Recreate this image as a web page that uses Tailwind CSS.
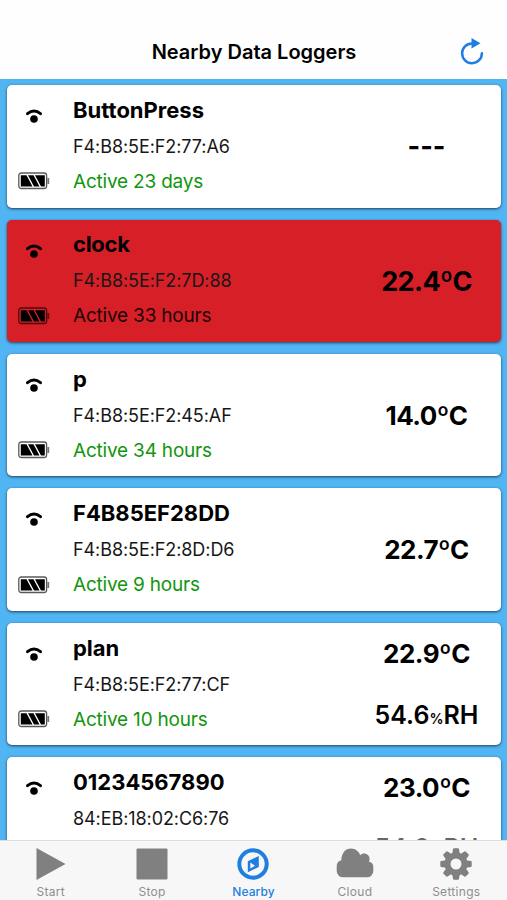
<!DOCTYPE html>
<html lang="en">
<head>
<meta charset="utf-8">
<title>Nearby Data Loggers</title>
<script src="https://cdn.jsdelivr.net/npm/@tailwindcss/browser@4"></script>
</head>
<body class="font-['Inter','Liberation_Sans',sans-serif] text-black">
<div class="flex flex-col w-[507px] h-[900px] overflow-hidden bg-[#52b5f3]">
  <header class="h-[79px] shrink-0 bg-[#fefefe] pt-[25px] pl-[24px] pr-[23px] flex items-center justify-between">
    <span class="w-6"></span>
    <h1 class="text-[20px] font-semibold leading-[54px] tracking-[0px]">Nearby Data Loggers</h1>
    <svg class="w-6 h-7" viewBox="0 0 24 28" fill="none"><path d="M12 5.400A9.900 9.900 0 1 0 21.900 15.200" stroke="#1f7fe0" stroke-width="2.5" stroke-linecap="round"/><path d="M11.500 0v10.400L20.500 5.200z" fill="#1f7fe0"/></svg>
  </header>
  <main id="list" class="flex-1 min-h-0 overflow-hidden flex flex-col gap-[12px] pt-[6.3px] pl-[7px] pr-[6px]"></main>
  <nav class="h-[60px] shrink-0 bg-[#f7f7f7] border-t border-[#dcdcdc] grid grid-cols-5 text-[12px] leading-[16px] tracking-[0.3px] text-[#8e8e8e]">
    <div class="flex flex-col items-center pt-[7px] gap-[4px]"><svg class="w-8 h-8" viewBox="0 0 32 32"><path d="M1.500 0 30.500 16 1.500 32z" fill="#808080"/></svg><span>Start</span></div>
    <div class="flex flex-col items-center pt-[7px] gap-[4px]"><svg class="w-8 h-8" viewBox="0 0 32 32"><rect x=".5" y=".5" width="31" height="31" rx="1" fill="#808080"/></svg><span>Stop</span></div>
    <div class="flex flex-col items-center pt-[7px] gap-[4px] text-[#1f7fe0] font-medium tracking-[0.1px]"><svg class="w-8 h-8" viewBox="0 0 32 32"><circle cx="16" cy="16" r="13.700" fill="none" stroke="#1f7fe0" stroke-width="4"/><path d="M21.800 8 10.800 13.200v11L21.800 19z" fill="#1f7fe0"/><path d="M13.300 14.500v6l4.700-2.800z" fill="#f7f7f7"/></svg><span>Nearby</span></div>
    <div class="flex flex-col items-center pt-[7px] gap-[4px]"><svg class="w-[38px] h-8" viewBox="0 0 38 32" fill="#808080"><path d="M7 29.300A6.300 6.300 0 0 1 .7 23v-5c0-3 1.800-5 4.600-5.800C5.500 5.200 9.300 .5 15 .5c4.300 0 8 2.800 9.200 6.800 1-1.200 2.300-1.700 3.800-1.700 3.300 0 5.700 2.500 5.600 5.400 0 1-.3 1.900-.8 2.600 2.700 .5 4.500 2.400 4.500 5.100V23a6.300 6.300 0 0 1-6.300 6.300z"/></svg><span>Cloud</span></div>
    <div class="flex flex-col items-center pt-[7px] gap-[4px]"><svg class="w-8 h-8" viewBox="-16 -16 32 32" fill="#808080"><defs><path id="tooth" d="M-4-9-3-14.800Q-2.800-15.700-2-15.700H2Q2.800-15.700 3-14.800L4-9z"/></defs><circle r="8.500" fill="none" stroke="#808080" stroke-width="6"/><use href="#tooth"/><use href="#tooth" transform="rotate(45)"/><use href="#tooth" transform="rotate(90)"/><use href="#tooth" transform="rotate(135)"/><use href="#tooth" transform="rotate(180)"/><use href="#tooth" transform="rotate(225)"/><use href="#tooth" transform="rotate(270)"/><use href="#tooth" transform="rotate(315)"/></svg><span>Settings</span></div>
  </nav>
</div>
<script>
const loggers = [
  { name: 'ButtonPress', mac: 'F4:B8:5E:F2:77:A6', status: 'Active 23 days', temp: '---' },
  { name: 'clock', mac: 'F4:B8:5E:F2:7D:88', status: 'Active 33 hours', temp: '22.4ºC', alarm: true },
  { name: 'p', mac: 'F4:B8:5E:F2:45:AF', status: 'Active 34 hours', temp: '14.0ºC' },
  { name: 'F4B85EF28DD', mac: 'F4:B8:5E:F2:8D:D6', status: 'Active 9 hours', temp: '22.7ºC' },
  { name: 'plan', mac: 'F4:B8:5E:F2:77:CF', status: 'Active 10 hours', temp: '22.9ºC', rh: '54.6' },
  { name: '01234567890', mac: '84:EB:18:02:C6:76', status: '', temp: '23.0ºC', rh: '54.6', last: true },
];
function tempClass(l) {
  if (l.temp === '---') return 'text-[27px] font-bold';
  if (l.alarm) return 'text-[27px] font-bold tracking-[-0.6px]';
  return 'text-[26px] font-bold tracking-[-0.5px]';
}
document.getElementById('list').innerHTML = loggers.map(l => `
<article class="h-[122.4px] shrink-0 rounded-[5px] flex shadow-[0_1px_3px_rgba(0,0,0,0.65)] ${l.alarm ? 'bg-[#d71f28]' : 'bg-white'}">
  <div class="w-[66px] pt-[23px] pl-[11px] flex flex-col gap-[48.2px]">
    <svg class="ml-[7.500px] w-4 h-4" viewBox="0 0 16 16"><path d="M1.500 5.700Q8 .1 14.500 5.700" fill="none" stroke="#000" stroke-width="2.900" stroke-linecap="round"/><circle cx="8" cy="11" r="3.800"/></svg>
    <svg class="w-8 h-[18px]" viewBox="0 0 32 18"><rect x=".8" y="1" width="27.800" height="15.500" rx="2.500" fill="none" stroke="#000" stroke-opacity=".65" stroke-width="1.300"/><path d="M29.500 6h1.700v6h-1.700z" fill-opacity=".55"/><path d="M2.800 3.200H8.500l6 11.400H2.800zM10 3.200h5.500l6 11.400H16zM17 3.200h9.800v11.400H23z"/></svg>
  </div>
  <div class="flex-1 pt-[6.700px]">
    <div class="h-9 leading-9 text-[22px] font-bold whitespace-nowrap ${l.name === 'clock' ? 'tracking-[-0.3px]' : ''}">${l.name}</div>
    <div class="h-9 leading-[38px] text-[18px] tracking-[-0.080px] text-[#171717] whitespace-nowrap">${l.mac}</div>
    <div class="h-[35px] leading-[36px] text-[19px] tracking-[-0.200px] whitespace-nowrap ${l.alarm ? 'text-[#200406]' : 'text-[#12960c]'}">${l.status}</div>
  </div>
  <div class="w-[149px] flex flex-col items-center whitespace-nowrap ${l.rh ? 'pt-[11.700px]' : 'pt-[43px]'} ${l.last ? 'gap-[24px]' : 'gap-[25px]'}">
    <div class="leading-[37px] ${tempClass(l)}">${l.temp}</div>
    ${l.rh ? `<div class="leading-[37px] text-[25px] font-semibold ${l.last ? 'text-black/60' : ''}">${l.rh}<span class="text-[14px]">%</span>RH</div>` : ''}
  </div>
</article>`).join('');
</script>
</body>
</html>
